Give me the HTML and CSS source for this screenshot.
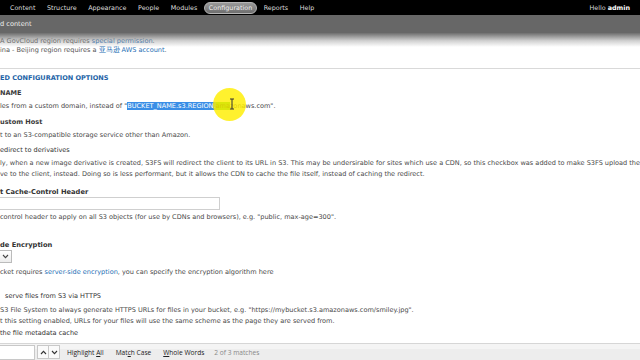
FILE: index.html
```html
<!DOCTYPE html>
<html>
<head>
<meta charset="utf-8">
<link rel="stylesheet" href="styles.css">
</head>
<body>
<div class="page">
  <div class="toolbar">
    <nav class="nav">
      <span>Content</span><span>Structure</span><span>Appearance</span><span>People</span><span>Modules</span><span class="active">Configuration</span><span>Reports</span><span>Help</span>
    </nav>
    <div class="hello">Hello <b>admin</b></div>
  </div>
  <div class="shortcuts">d content</div>
  <main class="content">
    <div class="shade"></div>
    <div class="notes">
      <div>A GovCloud region requires <a>special permission</a>.</div>
      <div>ina - Beijing region requires a <a>亚马逊 AWS account</a>.</div>
    </div>
    <section class="fieldset">
      <div class="legend">ED CONFIGURATION OPTIONS</div>
      <div class="label r-name">NAME</div>
      <div class="desc r-domain">les from a custom domain, instead of "<span class="sel">BUCKET_NAME.s3.REGION.</span><span class="found">ama</span>zonaws.com".</div>
      <div class="label r-host">ustom Host</div>
      <div class="desc r-hostdesc">t to an S3-compatible storage service other than Amazon.</div>
      <div class="label r-redirect plain">edirect to derivatives</div>
      <div class="desc r-redesc">
        <div>ly, when a new image derivative is created, S3FS will redirect the client to its URL in S3. This may be undersirable for sites which use a CDN, so this checkbox was added to make S3FS upload the</div>
        <div>ve to the client, instead. Doing so is less performant, but it allows the CDN to cache the file itself, instead of caching the redirect.</div>
      </div>
      <div class="heading r-cache">t Cache-Control Header</div>
      <div class="textfield"></div>
      <div class="desc r-cachedesc">control header to apply on all S3 objects (for use by CDNs and browsers), e.g. "public, max-age=300".</div>
      <div class="heading r-enc">de Encryption</div>
      <div class="select"><svg width="7" height="5" viewBox="0 0 7 5"><path d="M1 1 L3.5 3.6 L6 1" fill="none" stroke="#444" stroke-width="1.1"/></svg></div>
      <div class="desc r-encdesc">cket requires <a>server-side encryption</a>, you can specify the encryption algorithm here</div>
      <div class="label r-https indent plain">serve files from S3 via HTTPS</div>
      <div class="desc r-httpsdesc">
        <div>S3 File System to always generate HTTPS URLs for files in your bucket, e.g. "https://mybucket.s3.amazonaws.com/smiley.jpg".</div>
        <div>t this setting enabled, URLs for your files will use the same scheme as the page they are served from.</div>
      </div>
      <div class="label r-meta plain">the file metadata cache</div>
    </section>
    <div class="cursor-dot"></div>
    <svg class="ibeam" width="6" height="12" viewBox="0 0 6 12"><path d="M1 1 H5 M3 1 V11 M1 11 H5" fill="none" stroke="#333" stroke-width="1"/></svg>
  </main>
  <div class="findbar">
    <div class="findinput"></div>
    <div class="arrows">
      <span class="arrow"><svg width="7" height="5" viewBox="0 0 7 5"><path d="M1 4 L3.5 1.4 L6 4" fill="none" stroke="#333" stroke-width="1.1"/></svg></span>
      <span class="arrow"><svg width="7" height="5" viewBox="0 0 7 5"><path d="M1 1 L3.5 3.6 L6 1" fill="none" stroke="#333" stroke-width="1.1"/></svg></span>
    </div>
    <span class="opt">Highlight <u>A</u>ll</span>
    <span class="opt">Mat<u>c</u>h Case</span>
    <span class="opt"><u>W</u>hole Words</span>
    <span class="count">2 of 3 matches</span>
  </div>
</div>
</body>
</html>
```

FILE: styles.css
```css
html, body {
  margin: 0;
  padding: 0;
  background: #fff;
}
.page {
  width: 640px;
  height: 360px;
  overflow: hidden;
  display: flex;
  flex-direction: column;
  font-family: "DejaVu Sans", Verdana, sans-serif;
  font-size: 6.55px;
  color: #4a4a4a;
  white-space: nowrap;
}
a {
  color: #1f6fb5;
}
.toolbar {
  height: 15px;
  flex: none;
  background: #000;
  display: flex;
  align-items: center;
  justify-content: space-between;
  padding: 0 10px;
  color: #ddd;
  font-size: 6.4px;
}
.nav {
  display: flex;
  align-items: center;
  gap: 11.5px;
}
.nav .active {
  background: linear-gradient(#9a9a9a, #6e6e6e);
  border: 1px solid #b5b5b5;
  border-radius: 6px;
  padding: 1px 4px;
  margin: 0 -5px;
  color: #eee;
}
.hello b {
  color: #fff;
}
.shortcuts {
  height: 18px;
  flex: none;
  background: #676767;
  color: #eee;
  line-height: 19px;
  font-size: 6.6px;
}
.content {
  flex: 1;
  position: relative;
  overflow: hidden;
  padding-top: 4px;
}
.shade {
  position: absolute;
  left: 0;
  right: 0;
  top: 0;
  height: 14px;
  background: linear-gradient(rgba(103,103,103,0.95), rgba(150,150,150,0.45) 55%, rgba(255,255,255,0));
  pointer-events: none;
}
.notes {
  line-height: 9px;
  color: #555;
}
.fieldset {
  margin-top: 13px;
  border-top: 1px solid #d9d9d9;
}
.legend {
  margin-top: 4px;
  line-height: 10px;
  font-weight: bold;
  color: #2262a6;
}
.label {
  line-height: 10px;
  font-weight: bold;
  color: #3a3a3a;
}
.label.plain {
  font-weight: normal;
  color: #333;
}
.label.indent {
  padding-left: 5px;
}
.desc {
  line-height: 11px;
}
.heading {
  line-height: 10px;
  font-weight: bold;
  font-size: 6.7px;
  color: #333;
}
.r-name { margin-top: 5px; }
.r-domain { margin-top: 3px; }
.r-host { margin-top: 5px; }
.r-hostdesc { margin-top: 3px; }
.r-redirect { margin-top: 4px; }
.r-redesc { margin-top: 2.5px; }
.r-cache { margin-top: 7.5px; }
.r-cachedesc { margin-top: 1.5px; }
.r-enc { margin-top: 17.5px; }
.r-encdesc { margin-top: 3.5px; }
.r-https { margin-top: 13.5px; }
.r-httpsdesc { margin-top: 3.5px; }
.r-meta { margin-top: 1.5px; }
.sel {
  background: #3a8ee6;
  color: #fff;
}
.found {
  background: #38c838;
  color: #222;
}
.textfield {
  width: 219px;
  height: 11px;
  border: 1px solid #cfcfcf;
  border-left: none;
  background: #fff;
}
.select {
  width: 11px;
  height: 11px;
  border: 1px solid #bbb;
  border-left: none;
  background: linear-gradient(#fff, #ececec);
  display: flex;
  align-items: center;
  justify-content: center;
}
.cursor-dot {
  position: absolute;
  left: 213px;
  top: 55px;
  width: 33px;
  height: 33px;
  border-radius: 50%;
  background: rgba(255, 238, 0, 0.82);
  pointer-events: none;
}
.ibeam {
  position: absolute;
  left: 229px;
  top: 65px;
}
.findbar {
  height: 16px;
  flex: none;
  border-top: 1px solid #d6d6d6;
  background: linear-gradient(#f4f4f4, #f4f4f4 5px, #ededed 5px);
  display: flex;
  align-items: center;
  font-family: "Open Sans", "Noto Sans", sans-serif;
  font-size: 6.6px;
  color: #222;
}
.findinput {
  width: 34px;
  height: 13px;
  background: #fff;
  border: 1px solid #c8c8c8;
  border-left: none;
}
.arrows {
  display: flex;
  margin-left: 2px;
}
.arrow {
  width: 10px;
  height: 12px;
  border: 1px solid #c8c8c8;
  background: #fafafa;
  display: flex;
  align-items: center;
  justify-content: center;
}
.arrow + .arrow {
  border-left: none;
}
.opt {
  margin-left: 7px;
}
.opt + .opt {
  margin-left: 12px;
}
.count {
  margin-left: 10px;
  color: #888;
}
```
